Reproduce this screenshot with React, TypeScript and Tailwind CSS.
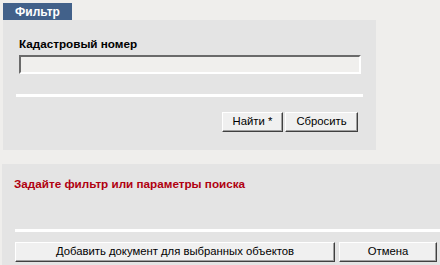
export default function App() {
  const btn =
    "h-[20px] bg-[#f0f0f0] border border-t-white border-l-white border-r-[#404040] border-b-[#404040] shadow-[inset_-1px_-1px_0_#a0a0a0] text-[11.3px] leading-none text-black flex items-center justify-center";

  return (
    <div className="w-[440px] h-[265px] overflow-hidden bg-[#efeeec] pt-[3px] font-['Liberation_Sans',Arial,sans-serif]">
      {/* Tab */}
      <div className="ml-[3px] w-[69px] h-[17px] bg-[#42618a] flex items-center justify-center">
        <span className="text-[12px] leading-none font-bold text-white">Фильтр</span>
      </div>

      {/* Filter panel */}
      <div className="ml-[3px] w-[373px] h-[130px] bg-[#e4e4e4] flex flex-col pt-[16px]">
        <div className="pl-[16px] text-[11.7px] leading-[15px] font-bold text-black">Кадастровый номер</div>
        <div className="ml-[16px] mt-[4px] w-[342px] h-[19px] bg-[#f0efed] border-2 border-t-[#6a6a6a] border-l-[#6a6a6a] border-r-white border-b-white" />
        <div className="ml-[13px] mt-[20px] w-[347px] h-[3px] bg-white" />
        <div className="mt-[15px] pr-[18px] flex justify-end gap-[2px]">
          <button className={`${btn} w-[61px]`}>Найти *</button>
          <button className={`${btn} w-[73px]`}>Сбросить</button>
        </div>
      </div>

      {/* Result panel */}
      <div className="ml-[2px] mt-[14px] w-[438px] h-[101px] bg-[#e4e4e4] flex flex-col pt-[12px]">
        <div className="pl-[12px] text-[11.7px] leading-[15px] font-bold text-[#b00010]">
          Задайте фильтр или параметры поиска
        </div>
        <div className="ml-[13px] mt-[38px] h-[3px] bg-white" />
        <div className="mt-[10px] pl-[13px] flex gap-[4px]">
          <button className={`${btn} w-[320px]`}>Добавить документ для выбранных объектов</button>
          <button className={`${btn} w-[98px]`}>Отмена</button>
        </div>
      </div>
    </div>
  );
}
